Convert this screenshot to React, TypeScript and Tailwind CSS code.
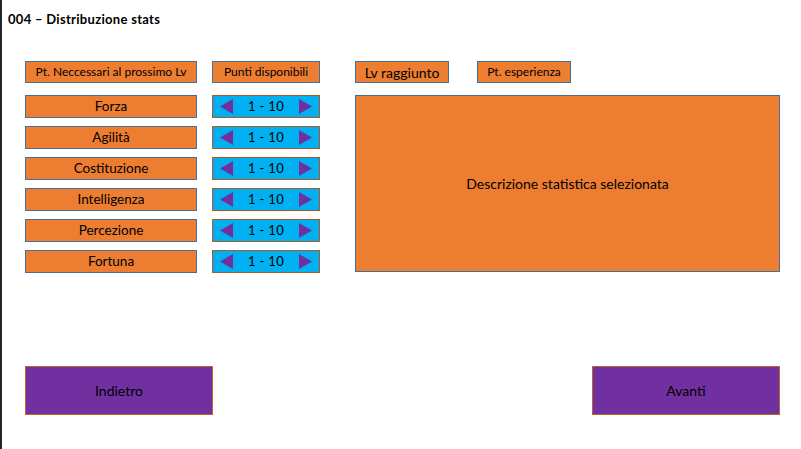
import React from 'react';

const stats = ['Forza', 'Agilità', 'Costituzione', 'Intelligenza', 'Percezione', 'Fortuna'];

const font = { fontFamily: 'Lato, "Liberation Sans", sans-serif' };

const Label = ({ text, className }: { text: string; className?: string }) => (
  <div
    className={`flex items-center justify-center h-[22px] bg-[#ed7d31] border-[1.5px] border-[#41719c] text-black ${className ?? ''}`}
  >
    {text}
  </div>
);

const Stepper = () => (
  <div className="flex items-center justify-between h-[23px] w-[108px] px-[7px] bg-[#00b0f0] border-[1.5px] border-[#ae5a21] text-[13px] text-black">
    <svg width="13" height="15" viewBox="0 0 13 15">
      <polygon points="13,0 13,15 0,7.5" fill="#7030a0" />
    </svg>
    <span className="tracking-wide">1 - 10</span>
    <svg width="13" height="15" viewBox="0 0 13 15">
      <polygon points="0,0 0,15 13,7.5" fill="#7030a0" />
    </svg>
  </div>
);

const App = () => {
  return (
    <div
      className="w-[801px] h-[449px] bg-white border-l-2 border-[#262626] flex flex-col overflow-hidden"
      style={font}
    >
      <div className="pl-[6px] pt-[10px] text-[13px] tracking-[0.3px] font-bold text-black leading-[18px]">
        004 – Distribuzione stats
      </div>

      <div className="flex pl-[23px] mt-[33px]">
        {/* left columns */}
        <div className="flex flex-col">
          <div className="flex gap-[15px]">
            <Label text="Pt. Neccessari al prossimo Lv" className="w-[172px] text-[12px]" />
            <Label text="Punti disponibili" className="w-[108px] text-[12px]" />
          </div>
          <div className="flex flex-col gap-[8px] mt-[12px]">
            {stats.map((s) => (
              <div key={s} className="flex gap-[15px]">
                <Label text={s} className="w-[172px] h-[23px] text-[13.5px]" />
                <Stepper />
              </div>
            ))}
          </div>
        </div>

        {/* right column */}
        <div className="flex flex-col ml-[35px]">
          <div className="flex gap-[28px]">
            <Label text="Lv raggiunto" className="w-[94px] text-[14px]" />
            <Label text="Pt. esperienza" className="w-[94px] text-[12px]" />
          </div>
          <div className="mt-[12px] w-[425px] h-[177px] flex items-center justify-center bg-[#ed7d31] border-[1.5px] border-[#41719c] text-[14px] text-black">
            Descrizione statistica selezionata
          </div>
        </div>
      </div>

      <div className="flex justify-between pl-[23px] pr-[21px] mt-[93px]">
        <div className="w-[188px] h-[49px] flex items-center justify-center bg-[#7030a0] border-[1.5px] border-[#c0652a] text-[14px] text-black">
          Indietro
        </div>
        <div className="w-[188px] h-[49px] flex items-center justify-center bg-[#7030a0] border-[1.5px] border-[#c0652a] text-[14px] text-black">
          Avanti
        </div>
      </div>
    </div>
  );
};

export default App;
